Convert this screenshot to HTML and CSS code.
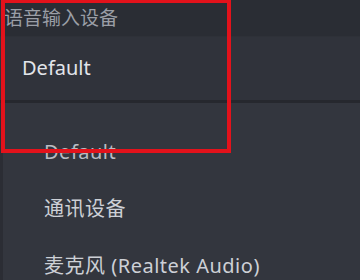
FILE: index.html
```html
<!DOCTYPE html>
<html lang="zh-CN">
<head>
    <meta charset="UTF-8">
    <meta name="viewport" content="width=device-width, initial-scale=1.0">
    <title>语音输入设备</title>
    <link rel="stylesheet" href="styles.css">
</head>
<body>
    <div class="panel">
        <div class="label">语音输入设备</div>
        <div class="field">Default</div>
        <div class="dropdown">
            <div class="option dim">Default</div>
            <div class="option">通讯设备</div>
            <div class="option">麦克风 (Realtek Audio)</div>
        </div>
        <div class="highlight"></div>
    </div>
</body>
</html>
```

FILE: styles.css
```css
body {
    margin: 0;
    padding: 0;
    background: #33363e;
    font-family: 'Noto Sans', 'Noto Sans CJK SC', sans-serif;
    overflow: hidden;
}

.panel {
    position: relative;
    width: 360px;
    height: 280px;
    overflow: hidden;
}

.label {
    height: 36px;
    padding-left: 4px;
    line-height: 36px;
    font-size: 19px;
    color: #9a9ea6;
    background: #2a2d34;
}

.field {
    height: 63px;
    padding-left: 22px;
    line-height: 62px;
    font-size: 20px;
    color: #e2e5ea;
    background: #30333b;
    border-top: 1px solid #2e3138;
    border-bottom: 3px solid #26282e;
}

.dropdown {
    padding-top: 20px;
    border-left: 3px solid #2b2d34;
    background: #33363e;
    height: 200px;
}

.option {
    height: 57px;
    padding-left: 41px;
    line-height: 57px;
    font-size: 20px;
    letter-spacing: 0.5px;
    color: #cdd0d6;
}

.option.dim {
    color: #b9bcc3;
}

.highlight {
    position: absolute;
    left: 1px;
    top: -1px;
    width: 230px;
    height: 154px;
    box-sizing: border-box;
    border: 4px solid #e3121b;
}
```
